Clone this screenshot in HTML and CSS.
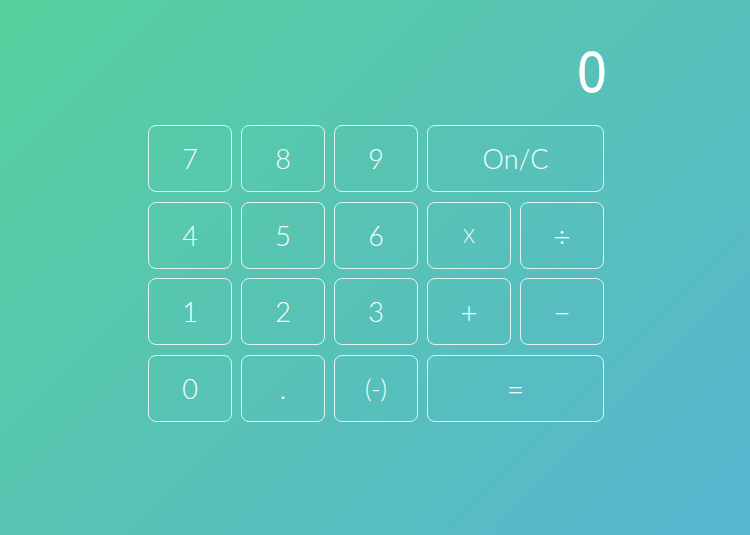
FILE: index.html
```html
<!DOCTYPE html>
<html lang="en">
<head>
<meta charset="utf-8">
<title>Calculator</title>
<link rel="stylesheet" href="styles.css">
</head>
<body>
<main class="calc">
  <div class="display"><span class="digit">0</span></div>
  <div class="keys">
    <button class="key">7</button>
    <button class="key">8</button>
    <button class="key">9</button>
    <button class="key wide">On/C</button>
    <button class="key">4</button>
    <button class="key">5</button>
    <button class="key">6</button>
    <button class="key times">x</button>
    <button class="key op">÷</button>
    <button class="key">1</button>
    <button class="key">2</button>
    <button class="key">3</button>
    <button class="key op">+</button>
    <button class="key op">−</button>
    <button class="key">0</button>
    <button class="key">.</button>
    <button class="key small">(-)</button>
    <button class="key wide op">=</button>
  </div>
</main>
</body>
</html>
```

FILE: styles.css
```css
html, body {
  margin: 0;
  padding: 0;
  height: 100%;
}
body {
  background: linear-gradient(135deg, #57d19e 0%, #57c2b6 50%, #58b5d1 100%);
  font-family: "Lato", "Roboto", "Noto Sans", sans-serif;
  color: #f2fffb;
  min-height: 535px;
}
.calc {
  width: 456px;
  margin: 0 auto;
  padding-left: 2px;
  padding-top: 43px;
}
.display {
  height: 82px;
  display: flex;
  justify-content: flex-end;
  align-items: flex-start;
}
.digit {
  font-family: "Liberation Sans", "Arial", sans-serif;
  font-weight: normal;
  font-size: 58px;
  line-height: 58px;
  color: #ffffff;
  -webkit-text-stroke: 0.6px #ffffff;
  transform: scaleX(0.88);
  transform-origin: right top;
  margin-right: -2px;
}
.keys {
  display: grid;
  grid-template-columns: repeat(5, 84px);
  grid-auto-rows: 67px;
  column-gap: 9px;
  row-gap: 9.66px;
}
.key {
  background: transparent;
  border: 1px solid rgba(255, 255, 255, 0.82);
  border-radius: 8px;
  color: #f4fffc;
  font-family: "Lato", "Roboto", "Noto Sans", sans-serif;
  font-weight: 300;
  font-size: 27px;
  padding: 0;
  display: flex;
  align-items: center;
  justify-content: center;
}
.key.op {
  font-size: 30px;
}
.key.times {
  font-size: 19px;
  text-transform: uppercase;
}
.key.small {
  font-size: 25px;
}
.wide {
  grid-column: span 2;
}
```
